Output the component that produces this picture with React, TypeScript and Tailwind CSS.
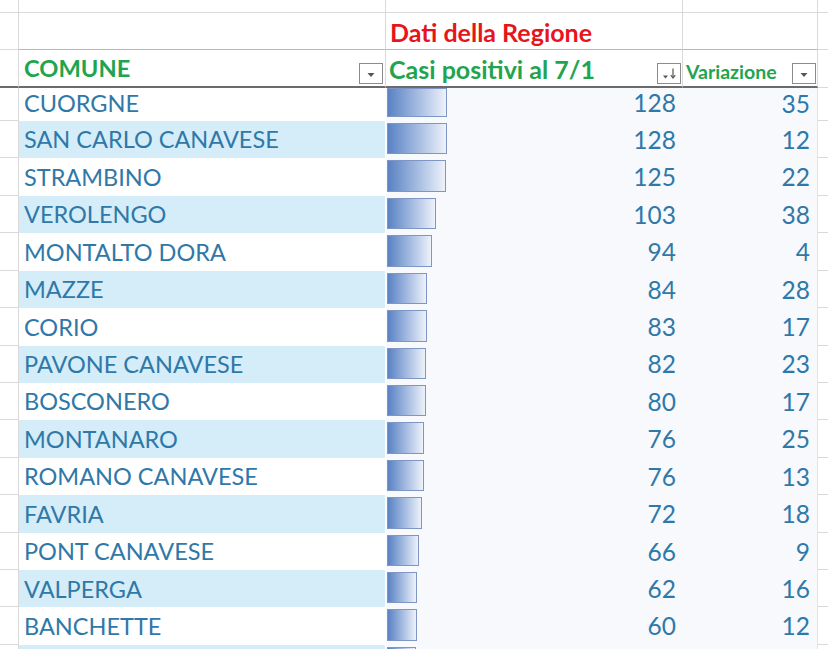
import React from "react";

const rows: [string, number, number][] = [
  ["CUORGNE", 128, 35],
  ["SAN CARLO CANAVESE", 128, 12],
  ["STRAMBINO", 125, 22],
  ["VEROLENGO", 103, 38],
  ["MONTALTO DORA", 94, 4],
  ["MAZZE", 84, 28],
  ["CORIO", 83, 17],
  ["PAVONE CANAVESE", 82, 23],
  ["BOSCONERO", 80, 17],
  ["MONTANARO", 76, 25],
  ["ROMANO CANAVESE", 76, 13],
  ["FAVRIA", 72, 18],
  ["PONT CANAVESE", 66, 9],
  ["VALPERGA", 62, 16],
  ["BANCHETTE", 60, 12],
];

function FilterButton({ sorted }: { sorted?: boolean }) {
  return (
    <div className="w-[24px] h-[21px] border border-[#8c8c8c] bg-white flex items-center justify-center shrink-0">
      {sorted ? (
        <svg width="18" height="15" viewBox="0 0 18 15">
          <path d="M3 9.5h5l-2.5 3z" fill="#555" />
          <path d="M13 2.5v9" stroke="#555" strokeWidth="1.2" />
          <path d="M10.8 9.2 13 12l2.2-2.8" stroke="#555" strokeWidth="1.2" fill="none" />
        </svg>
      ) : (
        <svg width="14" height="14" viewBox="0 0 14 14">
          <path d="M3.5 6h7l-3.5 4z" fill="#555" />
        </svg>
      )}
    </div>
  );
}

function DataRow({ name, pos, varz, index }: { name: string; pos: number; varz: number; index: number }) {
  const first = index === 0;
  const band = index % 2 === 1;
  return (
    <div className={`flex ${first ? "h-[33px]" : "h-[37.43px]"}`}>
      <div className="w-[19px] border-r border-b border-[#d9d9d9] bg-white" />
      <div
        className={`w-[367px] border-r border-white flex items-center pl-[5px] ${first ? "pb-[1px]" : "pt-[1px]"} text-[23.5px] text-[#2f78a8] ${
          band ? "bg-[#d4edf8]" : "bg-white"
        }`}
      >
        {name}
      </div>
      <div className={`w-[297px] bg-[#f7f9fd] flex items-stretch pr-[7px] ${first ? "pt-0 pb-[4px]" : "pt-[2px] pb-[4px]"}`}>
        <div
          className="ml-[1px] border border-[#7f96c4] bg-gradient-to-r from-[#5a82c3] to-[#eef2fa]"
          style={{ width: `${0.45 * pos + 2.5}px` }}
        />
        <div className={`flex-1 flex items-center justify-end text-[24.5px] text-[#2f78a8] ${first ? "pt-[1px]" : "pt-[3px]"}`}>
          {name ? pos : ""}
        </div>
      </div>
      <div
        className={`w-[135px] bg-[#f7f9fd] border-r border-[#e3e3e3] flex items-center justify-end pr-[7px] ${first ? "pb-[1px]" : "pt-[1px]"} text-[24.5px] text-[#2f78a8]`}
      >
        {name ? varz : ""}
      </div>
      <div className="flex-1 border-b border-[#d9d9d9] bg-white" />
    </div>
  );
}

export default function App() {
  return (
    <div className="w-[828px] h-[649px] overflow-hidden bg-white font-['Lato',sans-serif] leading-none">
      <div className="flex h-[13px]">
        <div className="w-[19px] border-r border-b border-[#d9d9d9]" />
        <div className="w-[367px] border-r border-b border-[#d9d9d9]" />
        <div className="w-[297px] border-r border-b border-[#d9d9d9]" />
        <div className="w-[135px] border-r border-b border-[#d9d9d9]" />
        <div className="flex-1 border-b border-[#d9d9d9]" />
      </div>
      <div className="flex h-[37px]">
        <div className="w-[19px] border-r border-b border-[#d9d9d9]" />
        <div className="w-[367px] border-r border-[#d9d9d9] border-b border-b-[#8cc7e0]" />
        <div className="w-[297px] border-r border-[#d9d9d9] border-b border-b-[#8cc7e0] flex items-center pl-[4px] pt-[2px] text-[25px] font-bold text-[#e8141c]">
          Dati della Regione
        </div>
        <div className="w-[135px] border-r border-[#d9d9d9] border-b border-b-[#8cc7e0]" />
        <div className="flex-1 border-b border-[#d9d9d9]" />
      </div>
      <div className="flex h-[38px]">
        <div className="w-[19px] border-r border-[#d9d9d9] border-b-2 border-b-[#6b6b6b]" />
        <div className="w-[367px] border-r border-[#d9d9d9] border-b-2 border-b-[#6b6b6b] flex items-end justify-between pl-[5px] pr-[2px] pb-[2px]">
          <span className="text-[23.7px] font-bold text-[#1fa54f] mb-[3px]">COMUNE</span>
          <FilterButton />
        </div>
        <div className="w-[297px] border-r border-[#d9d9d9] border-b-2 border-b-[#6b6b6b] flex items-end justify-between pl-[3px] pr-[1px] pb-[2px]">
          <span className="text-[25px] font-bold text-[#1fa54f] mb-[2px]">Casi positivi al 7/1</span>
          <FilterButton sorted />
        </div>
        <div className="w-[135px] border-r border-[#d9d9d9] border-b-2 border-b-[#6b6b6b] flex items-end justify-between pl-[3px] pr-[1px] pb-[2px]">
          <span className="text-[19.5px] font-bold text-[#1fa54f] mb-[3px]">Variazione</span>
          <FilterButton />
        </div>
        <div className="flex-1 border-b border-[#d9d9d9]" />
      </div>
      {rows.map((r, i) => (
        <DataRow key={r[0]} name={r[0]} pos={r[1]} varz={r[2]} index={i} />
      ))}
      <DataRow name="" pos={58} varz={0} index={15} />
    </div>
  );
}
